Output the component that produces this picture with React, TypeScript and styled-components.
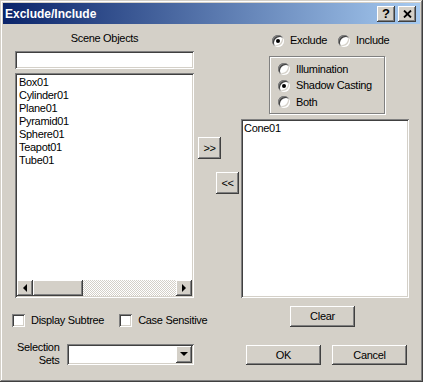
import * as React from 'react';
import styled, { createGlobalStyle } from 'styled-components';

const face = '#d4d0c8';

const raised = `
  background: ${face};
  box-shadow: inset -1px -1px #404040, inset 1px 1px #ffffff, inset -2px -2px #808080, inset 2px 2px ${face};
`;

const sunken = `
  background: #ffffff;
  box-shadow: inset 1px 1px #808080, inset -1px -1px #ffffff, inset 2px 2px #404040, inset -2px -2px ${face};
`;

const GlobalStyle = createGlobalStyle`
  body {
    margin: 0;
    background: ${face};
    font-family: "Liberation Sans", Arial, sans-serif;
    font-size: 11px;
    letter-spacing: -0.3px;
    color: #000;
  }
`;

const Window = styled.div`
  width: 423px;
  height: 382px;
  box-sizing: border-box;
  padding: 3px;
  background: ${face};
  box-shadow: inset -1px -1px #404040, inset 1px 1px ${face}, inset -2px -2px #808080, inset 2px 2px #ffffff;
  display: flex;
  flex-direction: column;
`;

const TitleBar = styled.div`
  height: 21px;
  flex: none;
  display: flex;
  align-items: center;
  padding: 0 4px 0 2px;
  background: linear-gradient(to right, #0a246a, #a6caf0);
  color: #fff;
  font-weight: bold;
  font-size: 12px;
  letter-spacing: 0;
`;

const TitleButtons = styled.div`
  margin-left: auto;
  display: flex;
  gap: 3px;
`;

const CaptionButton = styled.div`
  ${raised}
  width: 18px;
  height: 16px;
  display: flex;
  align-items: center;
  justify-content: center;
  color: #000;
  font-size: 13px;
  font-weight: bold;
  line-height: 1;
`;

const Content = styled.div`
  flex: 1;
  display: flex;
  padding-left: 12px;
`;

const LeftCol = styled.div`
  width: 179px;
  padding-top: 8px;
  display: flex;
  flex-direction: column;
`;

const Caption = styled.div`
  text-align: center;
  line-height: 13px;
  height: 13px;
`;

const Edit = styled.div`
  ${sunken}
  margin-top: 6px;
  height: 18px;
`;

const ListBox = styled.div<{ $h: number; $w?: number }>`
  ${sunken}
  height: ${(p) => p.$h}px;
  width: ${(p) => (p.$w ? `${p.$w}px` : 'auto')};
  box-sizing: border-box;
  padding: 2px;
  display: flex;
  flex-direction: column;
`;

const SceneList = styled(ListBox)`
  margin-top: 4px;
`;

const Item = styled.div<{ $indent?: number }>`
  line-height: 13px;
  padding-left: ${(p) => p.$indent ?? 2}px;
  white-space: nowrap;
  &:first-child {
    margin-top: 1px;
  }
`;

const ScrollBar = styled.div`
  margin-top: auto;
  height: 16px;
  display: flex;
`;

const ScrollBtn = styled.div`
  ${raised}
  width: 16px;
  height: 16px;
  display: flex;
  align-items: center;
  justify-content: center;
`;

const Thumb = styled.div`
  ${raised}
  width: 50px;
  height: 16px;
`;

const Track = styled.div`
  flex: 1;
  background: repeating-conic-gradient(${face} 0 25%, #ffffff 0 50%) 0 0 / 2px 2px;
`;

const CheckRow = styled.div`
  margin-top: 16px;
  margin-left: -3px;
  display: flex;
  align-items: center;
  height: 13px;
  gap: 15px;
`;

const Option = styled.label`
  display: flex;
  align-items: center;
  gap: 6px;
  line-height: 13px;
  white-space: nowrap;
`;

const CheckBox = styled.span`
  ${sunken}
  width: 13px;
  height: 13px;
  flex: none;
`;

const SelRow = styled.div`
  margin-top: 14px;
  display: flex;
  align-items: center;
`;

const SelLabel = styled.div`
  width: 45px;
  margin-right: 8px;
  text-align: right;
  line-height: 13px;
`;

const Combo = styled.div`
  ${sunken}
  width: 128px;
  height: 21px;
  box-sizing: border-box;
  padding: 2px;
  display: flex;
  justify-content: flex-end;
`;

const ComboBtn = styled(ScrollBtn)`
  height: 17px;
`;

const MidCol = styled.div`
  width: 47px;
  padding-top: 113px;
  display: flex;
  flex-direction: column;
  align-items: flex-start;
`;

const Button = styled.div<{ $w: number; $h?: number }>`
  ${raised}
  width: ${(p) => p.$w}px;
  height: ${(p) => p.$h ?? 20}px;
  display: flex;
  align-items: center;
  justify-content: center;
  line-height: 13px;
`;

const MoveRight = styled(Button)`
  margin-left: 4px;
`;

const MoveLeft = styled(Button)`
  margin-left: 22px;
  margin-top: 13px;
`;

const RightCol = styled.div`
  width: 168px;
  padding-top: 10px;
  display: flex;
  flex-direction: column;
  align-items: flex-start;
`;

const ModeRow = styled.div`
  margin-left: 31px;
  height: 13px;
  display: flex;
  align-items: center;
  gap: 11px;
`;

const Radio = styled.span<{ $on?: boolean }>`
  width: 12px;
  height: 12px;
  flex: none;
  border-radius: 50%;
  box-sizing: border-box;
  background: #fff;
  box-shadow: inset 1px 1px #808080, inset -1px -1px #ffffff, inset 2px 2px #404040, inset -2px -2px ${face};
  display: flex;
  align-items: center;
  justify-content: center;
  &::after {
    content: '';
    width: 4px;
    height: 4px;
    border-radius: 50%;
    background: ${(p) => (p.$on ? '#000' : 'transparent')};
  }
`;

const GroupBox = styled.div`
  margin-top: 9px;
  margin-left: 28px;
  width: 116px;
  height: 58px;
  box-sizing: border-box;
  border: 1px solid #808080;
  box-shadow: 1px 1px #fff, inset 1px 1px #fff;
  padding: 4px 0 0 8px;
  display: grid;
  grid-auto-rows: 16.5px;
  align-items: center;
`;

const TargetList = styled(ListBox)`
  margin-top: 5px;
`;

const ClearButton = styled(Button)`
  margin-top: 8px;
  margin-left: 49px;
`;

const ButtonRow = styled.div`
  margin-top: 18px;
  margin-left: 5px;
  display: flex;
  gap: 11px;
`;

const Tri = ({ dir }: { dir: 'left' | 'right' | 'down' }) => {
  const pts = dir === 'left' ? '5,0 5,8 1,4' : dir === 'right' ? '1,0 1,8 5,4' : '0,2 8,2 4,6';
  const w = dir === 'down' ? 8 : 6;
  return (
    <svg width={w} height={8} viewBox={`0 0 ${w} 8`}>
      <polygon points={pts} fill="#000" />
    </svg>
  );
};

const sceneObjects = ['Box01', 'Cylinder01', 'Plane01', 'Pyramid01', 'Sphere01', 'Teapot01', 'Tube01'];

export default function App() {
  return (
    <>
      <GlobalStyle />
      <Window>
        <TitleBar>
          Exclude/Include
          <TitleButtons>
            <CaptionButton>?</CaptionButton>
            <CaptionButton>
              <svg width="9" height="8" viewBox="0 0 9 8">
                <path d="M1 0.5 L8 7.5 M8 0.5 L1 7.5" stroke="#000" strokeWidth="1.8" />
              </svg>
            </CaptionButton>
          </TitleButtons>
        </TitleBar>
        <Content>
          <LeftCol>
            <Caption>Scene Objects</Caption>
            <Edit />
            <SceneList $h={225}>
              {sceneObjects.map((o) => (
                <Item key={o}>{o}</Item>
              ))}
              <ScrollBar>
                <ScrollBtn>
                  <Tri dir="left" />
                </ScrollBtn>
                <Thumb />
                <Track />
                <ScrollBtn>
                  <Tri dir="right" />
                </ScrollBtn>
              </ScrollBar>
            </SceneList>
            <CheckRow>
              <Option>
                <CheckBox />
                Display Subtree
              </Option>
              <Option>
                <CheckBox />
                Case Sensitive
              </Option>
            </CheckRow>
            <SelRow>
              <SelLabel>
                Selection
                <br />
                Sets
              </SelLabel>
              <Combo>
                <ComboBtn>
                  <Tri dir="down" />
                </ComboBtn>
              </Combo>
            </SelRow>
          </LeftCol>
          <MidCol>
            <MoveRight $w={23} $h={22}>&gt;&gt;</MoveRight>
            <MoveLeft $w={23} $h={22}>&lt;&lt;</MoveLeft>
          </MidCol>
          <RightCol>
            <ModeRow>
              <Option>
                <Radio $on />
                Exclude
              </Option>
              <Option>
                <Radio />
                Include
              </Option>
            </ModeRow>
            <GroupBox>
              <Option>
                <Radio />
                Illumination
              </Option>
              <Option>
                <Radio $on />
                Shadow Casting
              </Option>
              <Option>
                <Radio />
                Both
              </Option>
            </GroupBox>
            <TargetList $h={179} $w={168}>
              <Item $indent={1}>Cone01</Item>
            </TargetList>
            <ClearButton $w={65} $h={21}>Clear</ClearButton>
            <ButtonRow>
              <Button $w={75}>OK</Button>
              <Button $w={75}>Cancel</Button>
            </ButtonRow>
          </RightCol>
        </Content>
      </Window>
    </>
  );
}
